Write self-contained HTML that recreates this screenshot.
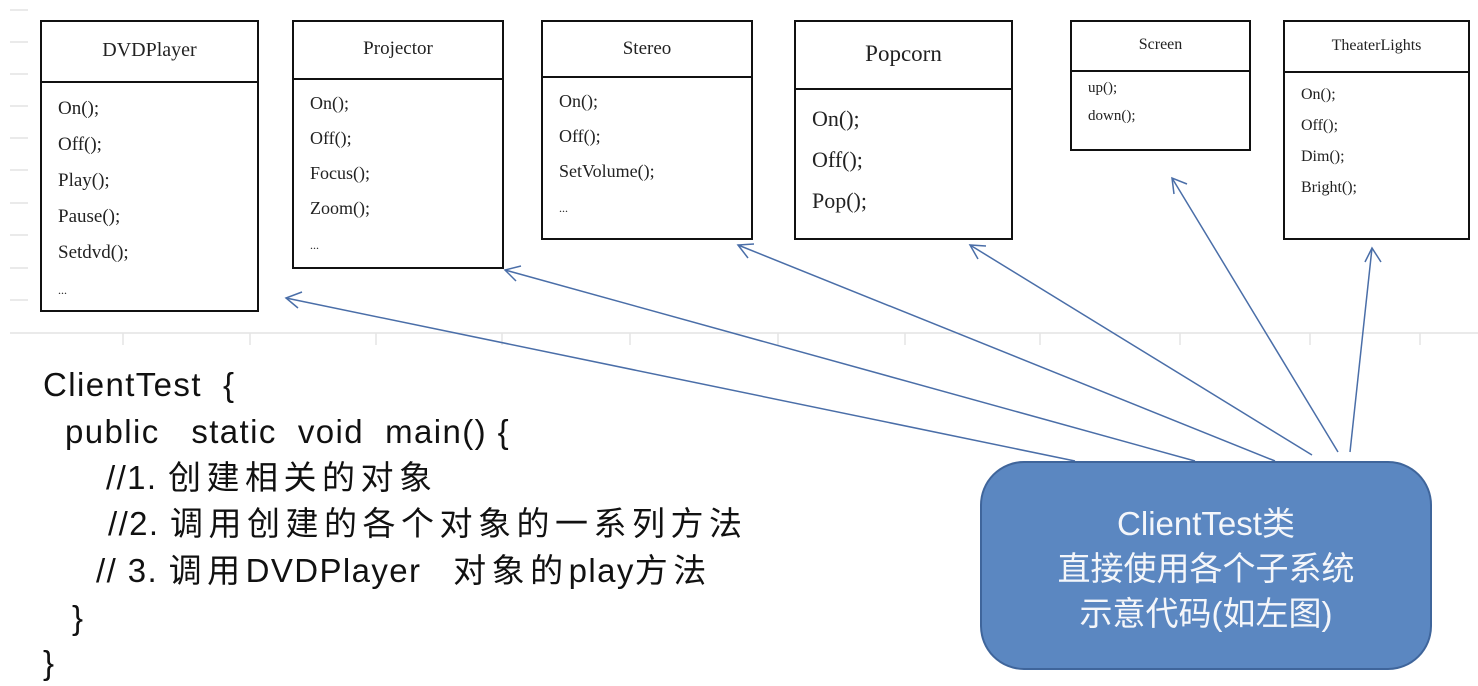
<!DOCTYPE html>
<html><head><meta charset="utf-8"><style>
body{margin:0;width:1478px;height:686px;background:#fff;position:relative;overflow:hidden;font-family:"Liberation Sans","Noto Sans CJK SC",sans-serif}
.box{position:absolute;border:2.5px solid #111;background:#fff;box-sizing:border-box;font-family:"Liberation Serif","Noto Serif CJK SC",serif;color:#222}
.hd{border-bottom:2.5px solid #111;text-align:center;box-sizing:border-box}
.bd{padding-left:16px}
.code{position:absolute;font-size:33px;color:#111;white-space:pre;line-height:34px;letter-spacing:1.4px}
.c{letter-spacing:5.5px}
</style></head><body>
<svg width="1478" height="686" style="position:absolute;left:0;top:0">
<g stroke="#e4e4e4" stroke-width="1.5">
<line x1="10" y1="333" x2="1478" y2="333"/>
<line x1="10" y1="10" x2="28" y2="10"/><line x1="10" y1="42" x2="28" y2="42"/><line x1="10" y1="74" x2="28" y2="74"/><line x1="10" y1="106" x2="28" y2="106"/><line x1="10" y1="138" x2="28" y2="138"/><line x1="10" y1="170" x2="28" y2="170"/><line x1="10" y1="203" x2="28" y2="203"/><line x1="10" y1="235" x2="28" y2="235"/><line x1="10" y1="268" x2="28" y2="268"/><line x1="10" y1="300" x2="28" y2="300"/>
<line x1="123" y1="333" x2="123" y2="345"/><line x1="250" y1="333" x2="250" y2="345"/><line x1="376" y1="333" x2="376" y2="345"/><line x1="502" y1="333" x2="502" y2="345"/><line x1="630" y1="333" x2="630" y2="345"/><line x1="778" y1="333" x2="778" y2="345"/><line x1="905" y1="333" x2="905" y2="345"/><line x1="1040" y1="333" x2="1040" y2="345"/><line x1="1180" y1="333" x2="1180" y2="345"/><line x1="1310" y1="333" x2="1310" y2="345"/><line x1="1420" y1="333" x2="1420" y2="345"/>
</g>
<g stroke="#4a6ea8" stroke-width="1.5" fill="none">
<line x1="1075" y1="461" x2="286" y2="298"/><polyline points="302,292 286,298 298,308"/>
<line x1="1195" y1="461" x2="505" y2="270"/><polyline points="521,266 505,270 516,281"/>
<line x1="1275" y1="461" x2="738" y2="245"/><polyline points="754,244 738,245 748,258"/>
<line x1="1312" y1="455" x2="970" y2="245"/><polyline points="986,246 970,245 978,259"/>
<line x1="1338" y1="452" x2="1172" y2="178"/><polyline points="1187,184 1172,178 1174,194"/>
<line x1="1350" y1="452" x2="1372" y2="248"/><polyline points="1381,262 1372,248 1365,262"/>
</g>
</svg>
<div class="box" style="left:40px;top:20px;width:219px;height:292px"><div class="hd" style="height:61px;line-height:56px;font-size:20px">DVDPlayer</div><div class="bd" style="font-size:19px;line-height:36px;padding-top:8px">On();<br>Off();<br>Play();<br>Pause();<br>Setdvd();<br><span style="font-size:12px">...</span></div></div>
<div class="box" style="left:292px;top:20px;width:212px;height:249px"><div class="hd" style="height:58px;line-height:54px;font-size:19px">Projector</div><div class="bd" style="font-size:18px;line-height:35px;padding-top:6px">On();<br>Off();<br>Focus();<br>Zoom();<br><span style="font-size:12px">...</span></div></div>
<div class="box" style="left:541px;top:20px;width:212px;height:220px"><div class="hd" style="height:56px;line-height:54px;font-size:19px">Stereo</div><div class="bd" style="font-size:18px;line-height:35px;padding-top:6px">On();<br>Off();<br>SetVolume();<br><span style="font-size:12px">...</span></div></div>
<div class="box" style="left:794px;top:20px;width:219px;height:220px"><div class="hd" style="height:68px;line-height:64px;font-size:23px">Popcorn</div><div class="bd" style="font-size:22px;line-height:41px;padding-top:8px">On();<br>Off();<br>Pop();</div></div>
<div class="box" style="left:1070px;top:20px;width:181px;height:131px"><div class="hd" style="height:50px;line-height:46px;font-size:16px">Screen</div><div class="bd" style="font-size:15px;line-height:28px;padding-top:2px">up();<br>down();</div></div>
<div class="box" style="left:1283px;top:20px;width:187px;height:220px"><div class="hd" style="height:51px;line-height:48px;font-size:16px">TheaterLights</div><div class="bd" style="font-size:16px;line-height:31px;padding-top:6px">On();<br>Off();<br>Dim();<br>Bright();</div></div>
<div class="code" style="left:43px;top:368px">ClientTest  {</div>
<div class="code" style="left:65px;top:415px">public   static  void  main() {</div>
<div class="code" style="left:106px;top:461px">//1. <span class="c">创建相关的对象</span></div>
<div class="code" style="left:108px;top:507px">//2. <span class="c">调用创建的各个对象的一系列方法</span></div>
<div class="code" style="left:96px;top:554px">// 3. <span class="c">调用</span>DVDPlayer   <span class="c">对象的</span>play<span class="c">方法</span></div>
<div class="code" style="left:72px;top:601px">}</div>
<div class="code" style="left:43px;top:646px">}</div>
<div style="position:absolute;left:980px;top:461px;width:452px;height:209px;box-sizing:border-box;background:#5b87c1;border:2px solid #3f659b;border-radius:44px;color:#f4f6fa;text-align:center;font-size:33px;line-height:45px;padding-top:38px">ClientTest类<br>直接使用各个子系统<br>示意代码(如左图)</div>
</body></html>
